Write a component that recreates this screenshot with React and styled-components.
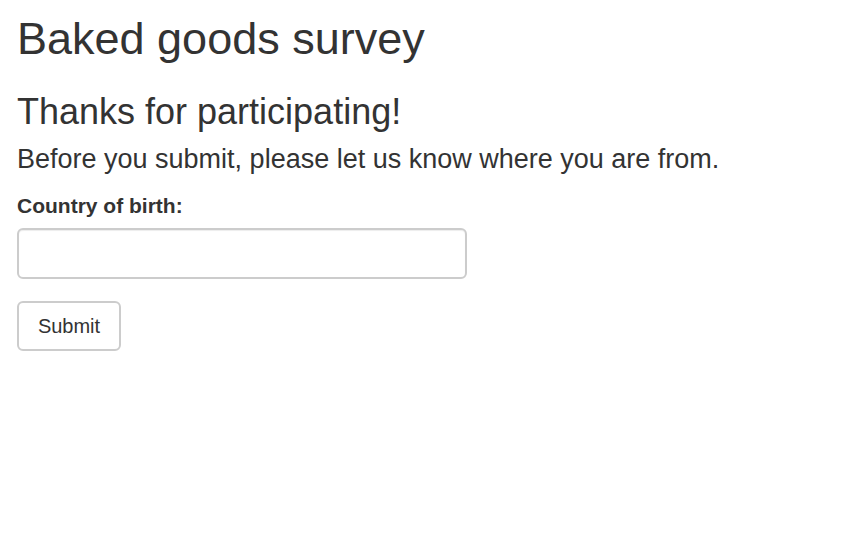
import React from "react";
import styled, { createGlobalStyle } from "styled-components";

const Global = createGlobalStyle`
  html, body { margin: 0; padding: 0; background: #fff; }
  body {
    font-family: "Liberation Sans", Arial, Helvetica, sans-serif;
    color: #333;
  }
  * { box-sizing: border-box; }
`;

const Page = styled.div`
  padding: 0 17px;
  display: flex;
  flex-direction: column;
  align-items: flex-start;
`;

const Title = styled.h2`
  margin: 14px 0 0;
  font-size: 45px;
  line-height: 49px;
  font-weight: 500;
`;

const Subtitle = styled.h3`
  margin: 29px 0 0;
  font-size: 36px;
  line-height: 40px;
  font-weight: 500;
`;

const Lead = styled.h4`
  margin: 12px 0 0;
  font-size: 27px;
  line-height: 30px;
  font-weight: 500;
`;

const Field = styled.div`
  margin-top: 17px;
  display: flex;
  flex-direction: column;
  gap: 8px;
`;

const Label = styled.label`
  font-size: 21px;
  line-height: 29px;
  font-weight: 700;
`;

const TextInput = styled.input`
  width: 450px;
  height: 51px;
  padding: 8px 17px;
  font-family: inherit;
  font-size: 20px;
  color: #555;
  background: #fff;
  border: 2px solid #ccc;
  border-radius: 6px;
  box-shadow: inset 0 1px 1px rgba(0, 0, 0, 0.075);
  outline: none;
`;

const Button = styled.button`
  margin-top: 22px;
  width: 104px;
  height: 50px;
  padding: 0;
  font-family: inherit;
  font-size: 20px;
  color: #333;
  background: #fff;
  border: 2px solid #ccc;
  border-radius: 6px;
  cursor: pointer;
`;

export default function App() {
  return (
    <>
      <Global />
      <Page>
        <Title>Baked goods survey</Title>
        <Subtitle>Thanks for participating!</Subtitle>
        <Lead>Before you submit, please let us know where you are from.</Lead>
        <Field>
          <Label htmlFor="country">Country of birth:</Label>
          <TextInput id="country" type="text" />
        </Field>
        <Button type="button">Submit</Button>
      </Page>
    </>
  );
}
